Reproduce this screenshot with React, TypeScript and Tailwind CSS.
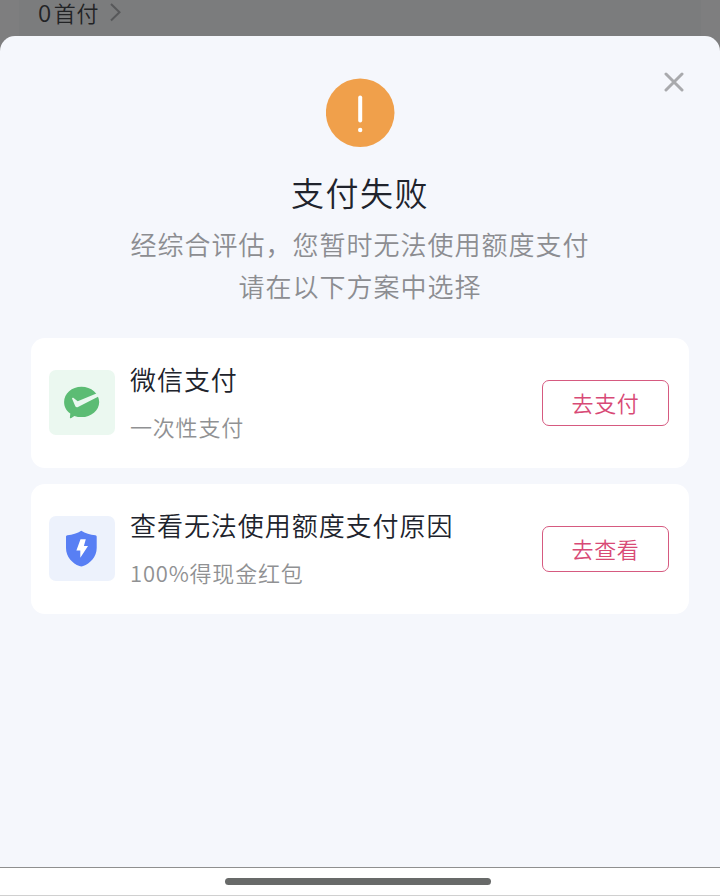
import type { ReactNode } from "react";

type PayOption = {
    title: string;
    note: string;
    action: string;
    iconBg: string;
    icon: ReactNode;
}

const WechatPayIcon = () => (
    <svg className="w-[65px] h-[65px]" viewBox="0 0 65 65" fill="none">
        <path d="M32.5 16.7C42.2 16.7 50.2 23.5 50.2 31.9C50.2 40.3 42.2 47.1 32.5 47.1C30 47.1 27.6 46.7 25.4 45.9L21.9 48.2C21.2 48.6 20.8 48.2 20.9 47.5L21.3 43.6C17.3 40.8 15.1 36.6 15.1 31.9C15.1 23.5 22.8 16.7 32.5 16.7Z" fill="#5cbc74" />
        <path d="M23 28.6C23 28 24 27.6 24.6 28L28.7 31.2L48 23.2L50 26.3L29 37.1C27.9 37.6 26.8 37.3 26.3 36.3Z" fill="#ebf8f0" />
    </svg>
)

const ShieldIcon = () => (
    <svg className="w-[65px] h-[65px]" viewBox="0 0 65 65" fill="none">
        <path d="M32.3 14.7C36.2 17.2 41.2 18.9 46.3 19.2C47.2 19.3 47.7 19.8 47.7 20.7V32C47.7 41 41 47.4 34.2 50.1C33 50.5 31.6 50.5 30.4 50.1C23.6 47.4 17 41 17 32V20.7C17 19.8 17.5 19.3 18.4 19.2C23.4 18.9 28.4 17.2 32.3 14.7Z" fill="#587ff4" />
        <path d="M31.5 23.2H36.8L34.9 30H39L31.3 41.8V34.6H27.4Z" fill="#ffffff" />
    </svg>
)

const options: PayOption[] = [
    { title: "微信支付", note: "一次性支付", action: "去支付", iconBg: "bg-[#ebf8f0]", icon: <WechatPayIcon /> },
    { title: "查看无法使用额度支付原因", note: "100%得现金红包", action: "去查看", iconBg: "bg-[#edf2fc]", icon: <ShieldIcon /> },
]

const OptionCard = ({ title, note, action, iconBg, icon }: PayOption) => {
    return (
        <div className="w-full h-[130px] pl-[18px] pr-5 flex items-center bg-white rounded-[14px]">
            <div className={`w-[66px] h-[65px] mb-px shrink-0 rounded-[7px] ${iconBg}`}>
                {icon}
            </div>
            <div className="flex flex-col ml-[15px] mb-px whitespace-nowrap">
                <h2 className="text-[26px] leading-[40px] tracking-[0.95px] text-[#20232c]">{title}</h2>
                <p className="mt-[7px] text-[22px] leading-[40px] tracking-[0.8px] text-[#909193]">{note}</p>
            </div>
            <button className="w-[127px] h-[46px] ml-auto pb-px shrink-0 border border-[#d65a80] rounded-[7px] text-[22px] tracking-[0.7px] text-[#d84a76] cursor-pointer">
                {action}
            </button>
        </div>
    )
}

const App = () => {
    return (
        <div className="w-[720px] h-[896px] flex flex-col overflow-hidden bg-[#7e7e7f] font-['Noto_Sans_CJK_SC',sans-serif] font-[350]">
            {/*Dimmed page behind the sheet*/}
            <div className="h-9 shrink-0 px-[19px]">
                <div className="h-9 pl-[19px] flex items-start bg-[#7b7c7d] text-[#222325]">
                    <div className="flex gap-[2px] text-[22px] leading-[24px] tracking-[0.6px]">
                        <span className="text-[24px]">0</span>
                        <span>首付</span>
                    </div>
                    <svg className="w-3 h-5 ml-[10px] mt-[2px]" viewBox="0 0 12 20" fill="none" stroke="#57585a" strokeWidth="2">
                        <path d="M2 2L10.5 10.2L2 18.5" />
                    </svg>
                </div>
            </div>

            {/*Bottom sheet*/}
            <div className="flex-1 flex flex-col items-center relative bg-[#f5f7fc] rounded-t-[15px] px-[31px] pt-[42px]">
                <button className="absolute top-9 right-9 cursor-pointer" aria-label="关闭">
                    <svg className="w-5 h-5" viewBox="0 0 20 20" fill="none" stroke="#a9aaad" strokeWidth="3" strokeLinecap="round">
                        <path d="M2 2L18 18M18 2L2 18" />
                    </svg>
                </button>
                <svg className="w-[69px] h-[69px] shrink-0" viewBox="0 0 69 69">
                    <circle cx="34.2" cy="34.7" r="34.3" fill="#f0a04b" />
                    <rect x="32.2" y="17.5" width="4" height="27" rx="2" fill="#ffffff" />
                    <circle cx="34.2" cy="52" r="2.2" fill="#ffffff" />
                </svg>
                <h1 className="mt-[21px] text-[33px] leading-[48px] tracking-[1.5px] text-[#20232c]">支付失败</h1>
                <p className="mt-[7px] text-[26px] leading-[42px] tracking-[1px] text-center text-[#8c8d91]">
                    经综合评估，您暂时无法使用额度支付
                    <br />
                    请在以下方案中选择
                </p>
                <div className="w-full flex flex-col gap-4 mt-[31px]">
                    {options.map((option) => (
                        <OptionCard key={option.title} {...option} />
                    ))}
                </div>
            </div>

            {/*Gesture bar*/}
            <div className="h-[29px] shrink-0 flex justify-center items-center bg-white border-t border-t-[#8f8f8f] border-b border-b-[#d0d0d0]">
                <div className="w-[266px] h-[7px] mr-1 rounded-full bg-[#686a69]"></div>
            </div>
        </div>
    )
}

export default App
